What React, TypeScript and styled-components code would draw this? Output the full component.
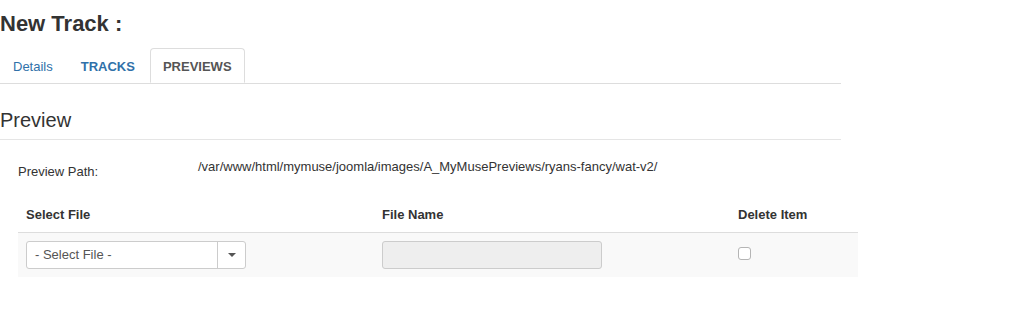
import React from 'react';
import styled, { createGlobalStyle } from 'styled-components';

const GlobalStyle = createGlobalStyle`
  body {
    margin: 0;
    background: #ffffff;
    font-family: 'Liberation Sans', Arial, sans-serif;
    color: #333333;
  }
`;

const Page = styled.div`
  width: 1013px;
  height: 313px;
  overflow: hidden;
`;

const Container = styled.div`
  width: 841px;
`;

const Title = styled.h1`
  margin: 0;
  padding-top: 12px;
  font-size: 22px;
  font-weight: 700;
  line-height: 24px;
  color: #333333;
`;

const Tabs = styled.ul`
  list-style: none;
  margin: 12px 0 0;
  padding: 0;
  display: flex;
  border-bottom: 1px solid #dddddd;
  height: 35px;
`;

const Tab = styled.li<{ $active?: boolean; $bold?: boolean }>`
  margin-right: 2px;
  margin-bottom: -1px;
  padding: 1px 12px 0 12px;
  height: 35px;
  display: flex;
  align-items: center;
  font-size: 13px;
  font-weight: ${(p) => (p.$bold ? 700 : 400)};
  color: ${(p) => (p.$active ? '#555555' : '#3071a9')};
  background: ${(p) => (p.$active ? '#ffffff' : 'transparent')};
  border: 1px solid ${(p) => (p.$active ? '#dddddd' : 'transparent')};
  border-bottom-color: ${(p) => (p.$active ? '#ffffff' : 'transparent')};
  border-radius: 4px 4px 0 0;
  box-sizing: border-box;
`;

const SectionTitle = styled.h2`
  margin: 25px 0 0;
  padding-bottom: 8px;
  font-size: 20px;
  font-weight: 400;
  line-height: 22px;
  color: #333333;
  border-bottom: 1px solid #e5e5e5;
`;

const PathRow = styled.div`
  display: flex;
  margin: 18px 0 0 18px;
  font-size: 13px;
`;

const PathLabel = styled.div`
  width: 180px;
  padding-top: 5px;
  line-height: 18px;
`;

const PathValue = styled.div`
  font-size: 13px;
  line-height: 18px;
  color: #333333;
`;

const Table = styled.table`
  margin: 17px 0 0 18px;
  width: 840px;
  table-layout: fixed;
  border-collapse: collapse;
  font-size: 13px;
`;

const HeadCell = styled.th<{ $w: number }>`
  width: ${(p) => p.$w}px;
  text-align: left;
  padding: 8px;
  line-height: 18px;
  font-weight: 700;
  border-bottom: 1px solid #dddddd;
`;

const Row = styled.tr`
  background: #f9f9f9;
`;

const Cell = styled.td`
  padding: 8px;
  vertical-align: top;
`;

const SelectBox = styled.div`
  width: 220px;
  height: 28px;
  display: flex;
  box-sizing: border-box;
  border: 1px solid #cccccc;
  border-radius: 3px;
  background: #ffffff;
`;

const SelectText = styled.div`
  flex: 1;
  padding-left: 8px;
  line-height: 26px;
  font-size: 13px;
  color: #555555;
`;

const SelectArrow = styled.div`
  width: 27px;
  border-left: 1px solid #cccccc;
  display: flex;
  align-items: center;
  justify-content: center;
  &::after {
    content: '';
    border-left: 4px solid transparent;
    border-right: 4px solid transparent;
    border-top: 4px solid #555555;
  }
`;

const TextInput = styled.div`
  width: 220px;
  height: 28px;
  box-sizing: border-box;
  border: 1px solid #cccccc;
  border-radius: 3px;
  background: #eeeeee;
`;

const Checkbox = styled.div`
  width: 13px;
  height: 13px;
  margin-top: 6px;
  box-sizing: border-box;
  border: 1px solid #b5b5b5;
  border-radius: 3px;
  background: #ffffff;
`;

const App: React.FC = () => {
  return (
    <Page>
      <GlobalStyle />
      <Container>
        <Title>New Track :</Title>
        <Tabs>
          <Tab>Details</Tab>
          <Tab $bold>TRACKS</Tab>
          <Tab $bold $active>PREVIEWS</Tab>
        </Tabs>
        <SectionTitle>Preview</SectionTitle>
        <PathRow>
          <PathLabel>Preview Path:</PathLabel>
          <PathValue>/var/www/html/mymuse/joomla/images/A_MyMusePreviews/ryans-fancy/wat-v2/</PathValue>
        </PathRow>
      </Container>
      <Table>
        <thead>
          <tr>
            <HeadCell $w={340}>Select File</HeadCell>
            <HeadCell $w={340}>File Name</HeadCell>
            <HeadCell $w={112}>Delete Item</HeadCell>
          </tr>
        </thead>
        <tbody>
          <Row>
            <Cell>
              <SelectBox>
                <SelectText>- Select File -</SelectText>
                <SelectArrow />
              </SelectBox>
            </Cell>
            <Cell>
              <TextInput />
            </Cell>
            <Cell>
              <Checkbox />
            </Cell>
          </Row>
        </tbody>
      </Table>
    </Page>
  );
};

export default App;
